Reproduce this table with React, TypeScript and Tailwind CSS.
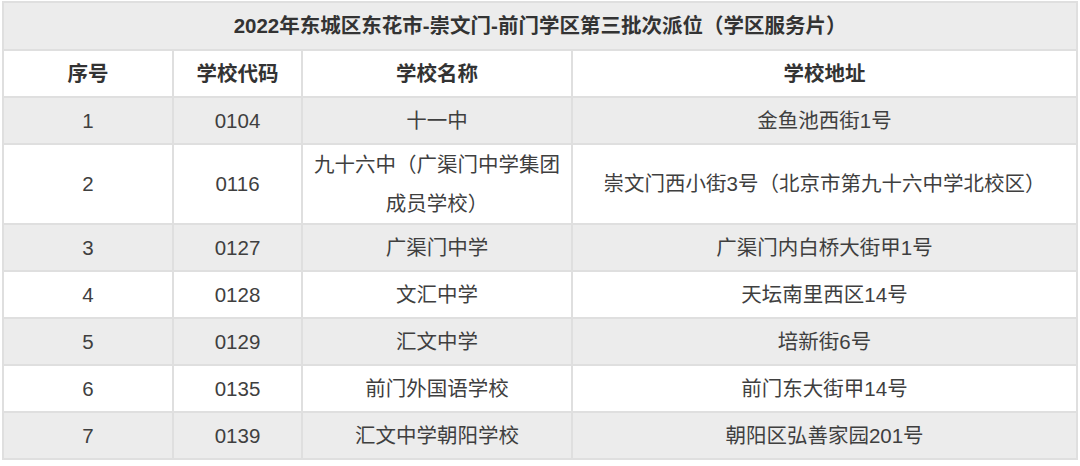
const rows = [
  { no: '1', code: '0104', name: '十一中', addr: '金鱼池西街1号' },
  { no: '2', code: '0116', name: '九十六中（广渠门中学集团成员学校）', addr: '崇文门西小街3号（北京市第九十六中学北校区）' },
  { no: '3', code: '0127', name: '广渠门中学', addr: '广渠门内白桥大街甲1号' },
  { no: '4', code: '0128', name: '文汇中学', addr: '天坛南里西区14号' },
  { no: '5', code: '0129', name: '汇文中学', addr: '培新街6号' },
  { no: '6', code: '0135', name: '前门外国语学校', addr: '前门东大街甲14号' },
  { no: '7', code: '0139', name: '汇文中学朝阳学校', addr: '朝阳区弘善家园201号' },
];

const cell = 'border-2 border-[#dfdfdf] p-0 leading-[26px]';

export default function App() {
  return (
    <div
      className="w-[1080px] h-[466px] bg-white pl-[2px] pt-[1px] text-[#3f3f3f]"
      style={{ fontFamily: '"Liberation Sans", "Noto Sans CJK SC", sans-serif' }}
    >
      <table className="w-[1076px] table-fixed border-collapse text-center text-[20.5px]">
        <colgroup>
          <col className="w-[170px]" />
          <col className="w-[129px]" />
          <col className="w-[270px]" />
          <col className="w-[505px]" />
        </colgroup>
        <thead>
          <tr className="bg-[#ececec] h-[48px]">
            <th colSpan={4} className={cell + ' font-bold text-[#333]'}>
              2022年东城区东花市-崇文门-前门学区第三批次派位（学区服务片）
            </th>
          </tr>
          <tr className="bg-white h-[47px]">
            <th className={cell + ' font-bold text-[#333]'}>序号</th>
            <th className={cell + ' font-bold text-[#333]'}>学校代码</th>
            <th className={cell + ' font-bold text-[#333]'}>学校名称</th>
            <th className={cell + ' font-bold text-[#333]'}>学校地址</th>
          </tr>
        </thead>
        <tbody>
          {rows.map((r, i) => (
            <tr key={r.no} className={(i % 2 === 0 ? 'bg-[#ececec]' : 'bg-white') + ' h-[47px]'}>
              <td className={cell}>{r.no}</td>
              <td className={cell}>{r.code}</td>
              <td className="border-2 border-[#dfdfdf] px-[8px] py-0 leading-[39px]">{r.name}</td>
              <td className={cell + ' px-[8px]'}>{r.addr}</td>
            </tr>
          ))}
        </tbody>
      </table>
    </div>
  );
}
